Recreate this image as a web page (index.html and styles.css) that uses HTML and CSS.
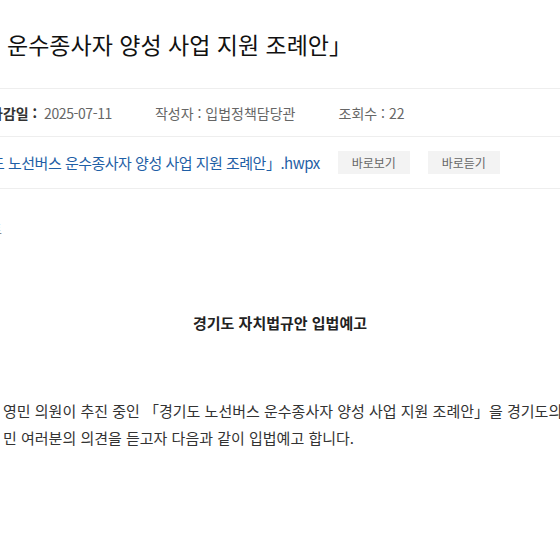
FILE: index.html
```html
<!DOCTYPE html>
<html lang="ko">
<head>
  <meta charset="UTF-8">
  <title>입법예고</title>
  <link rel="stylesheet" href="styles.css">
</head>
<body>

  <div class="board">
    <h2 class="title">운수종사자 양성 사업 지원 조례안」</h2>

    <div class="meta">
      <span class="meta-item first"><b>마감일 :</b> <span class="date">2025-07-11</span></span>
      <span class="meta-item">작성자 : 입법정책담당관</span>
      <span class="meta-item">조회수 : 22</span>
    </div>

    <div class="file">
      <a class="file-link" href="#">도 노선버스 운수종사자 양성 사업 지원 조례안」.hwpx</a>
      <button class="btn">바로보기</button>
      <button class="btn">바로듣기</button>
    </div>

    <div class="content">
      <p class="note">트</p>
      <p class="heading">경기도 자치법규안 입법예고</p>
      <p class="text">영민 의원이 추진 중인 「경기도 노선버스 운수종사자 양성 사업 지원 조례안」을 경기도의회<br>민 여러분의 의견을 듣고자 다음과 같이 입법예고 합니다.</p>
    </div>
  </div>

</body>
</html>
```

FILE: styles.css
```css
body {
  margin: 0;
  background: #fff;
  font-family: "Noto Sans CJK KR", "Noto Sans", sans-serif;
  color: #333;
  overflow: hidden;
}
.board {
  width: 560px;
  overflow: hidden;
}
.title {
  box-sizing: border-box;
  height: 89px;
  margin: 0;
  padding-left: 7px;
  display: flex;
  align-items: center;
  font-size: 23px;
  font-weight: normal;
  color: #111;
  white-space: nowrap;
  border-bottom: 1px solid #eee;
}
.meta {
  box-sizing: border-box;
  height: 48px;
  display: flex;
  align-items: center;
  gap: 43px;
  font-size: 14px;
  color: #666;
  white-space: nowrap;
  border-bottom: 1px solid #eee;
}
.meta-item b {
  color: #333;
}
.meta-item.first {
  margin-left: -10px;
}
.date {
  margin-left: 3px;
  letter-spacing: -0.4px;
}
.file {
  box-sizing: border-box;
  height: 52px;
  display: flex;
  align-items: center;
  gap: 18px;
  white-space: nowrap;
  border-bottom: 1px solid #eee;
}
.file-link {
  margin-left: -9px;
  font-size: 15px;
  letter-spacing: -0.5px;
  color: #1f5fa6;
  text-decoration: none;
}
.btn {
  width: 72px;
  height: 23px;
  padding: 0;
  background: #f3f3f3;
  border: none;
  font-family: inherit;
  font-size: 12px;
  color: #666;
}
.content p {
  margin: 0;
  white-space: nowrap;
}
.note {
  margin-top: 30px !important;
  margin-left: -10px !important;
  line-height: 20px;
  font-size: 13px;
  color: #888;
}
.heading {
  margin-top: 74px !important;
  line-height: 20px;
  text-align: center;
  font-size: 15px;
  font-weight: bold;
  color: #222;
}
.text {
  margin-top: 64px !important;
  padding-left: 3px;
  line-height: 27px;
  font-size: 15px;
  color: #333;
}
```
